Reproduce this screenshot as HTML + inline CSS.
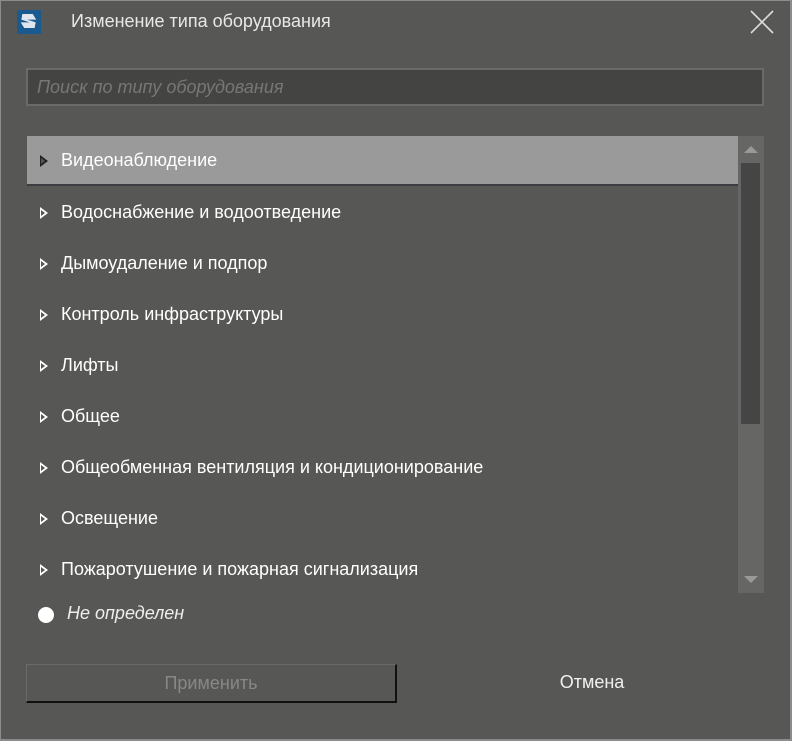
<!DOCTYPE html>
<html><head><meta charset="utf-8"><style>
body{margin:0;width:792px;height:741px;overflow:hidden;background:#8c8c8c;font-family:"Liberation Sans","DejaVu Sans",sans-serif;}
.win{position:absolute;left:1px;top:1px;width:789px;height:738px;background:#575755;}
.t{position:absolute;color:#fff;font-size:18px;white-space:nowrap}
.row{position:absolute;left:27px;width:711px;height:48px;}
.arr{position:absolute;left:40px;width:0;height:0;border-top:6px solid transparent;border-bottom:6px solid transparent;border-left:8px solid #fff;}
.arr::after{content:"";position:absolute;left:-7px;top:-3px;border-top:3px solid transparent;border-bottom:3px solid transparent;border-left:4px solid #575755;}
</style></head><body><div class="win"></div>
<div style="position:absolute;left:17px;top:10px;width:24px;height:24px;background:#1a5a8e"></div>
<div style="position:absolute;left:21px;top:14px;width:15px;height:14px;background:#dfe6ee;transform:skewX(-10deg);clip-path:polygon(0 0,70% 0,100% 40%,40% 40%,100% 60%,100% 100%,30% 100%,0 60%,60% 60%,0 40%)"></div>
<div class="t" style="left:71px;top:11px;color:#e8e8e8">Изменение типа оборудования</div>
<svg style="position:absolute;left:750px;top:10px" width="24" height="24"><path d="M1 1L23 23M23 1L1 23" stroke="#ddd" stroke-width="1.6"/></svg>
<div style="position:absolute;left:26px;top:68px;width:734px;height:34px;border:2px solid #6a6a68;background:#444443"></div>
<div class="t" style="left:37px;top:77px;color:#777;font-style:italic">Поиск по типу оборудования</div>
<div class="row" style="top:136px;background:#9a9a9a;border-bottom:2px solid #3c3c42;height:48px"></div>
<div style="position:absolute;left:738px;top:136px;width:26px;height:457px;background:#666665"></div>
<div style="position:absolute;left:741px;top:163px;width:19px;height:261px;background:#454545"></div>
<div style="position:absolute;left:744px;top:146px;border-left:7px solid transparent;border-right:7px solid transparent;border-bottom:7px solid #999"></div>
<div style="position:absolute;left:744px;top:576px;border-left:7px solid transparent;border-right:7px solid transparent;border-top:7px solid #999"></div>
<div class="arr" style="top:155px;border-left-color:#222"></div><div class="t" style="left:61px;top:150px">Видеонаблюдение</div>
<div class="arr" style="top:207px"></div><div class="t" style="left:61px;top:202px">Водоснабжение и водоотведение</div>
<div class="arr" style="top:258px"></div><div class="t" style="left:61px;top:253px">Дымоудаление и подпор</div>
<div class="arr" style="top:309px"></div><div class="t" style="left:61px;top:304px">Контроль инфраструктуры</div>
<div class="arr" style="top:360px"></div><div class="t" style="left:61px;top:355px">Лифты</div>
<div class="arr" style="top:411px"></div><div class="t" style="left:61px;top:406px">Общее</div>
<div class="arr" style="top:462px"></div><div class="t" style="left:61px;top:457px">Общеобменная вентиляция и кондиционирование</div>
<div class="arr" style="top:513px"></div><div class="t" style="left:61px;top:508px">Освещение</div>
<div class="arr" style="top:564px"></div><div class="t" style="left:61px;top:559px">Пожаротушение и пожарная сигнализация</div>
<div style="position:absolute;left:38px;top:607px;width:16px;height:16px;border-radius:50%;background:#fff"></div>
<div class="t" style="left:67px;top:603px;font-style:italic;color:#eee">Не определен</div>
<div style="position:absolute;left:26px;top:664px;width:368px;height:36px;border:1px solid #6a6a68;border-right:2px solid #111;border-bottom:2px solid #111"></div>
<div class="t" style="left:26px;top:673px;width:370px;text-align:center;color:#888">Применить</div>
<div class="t" style="left:492px;top:672px;width:200px;text-align:center;color:#f0f0f0">Отмена</div>
</body></html>
